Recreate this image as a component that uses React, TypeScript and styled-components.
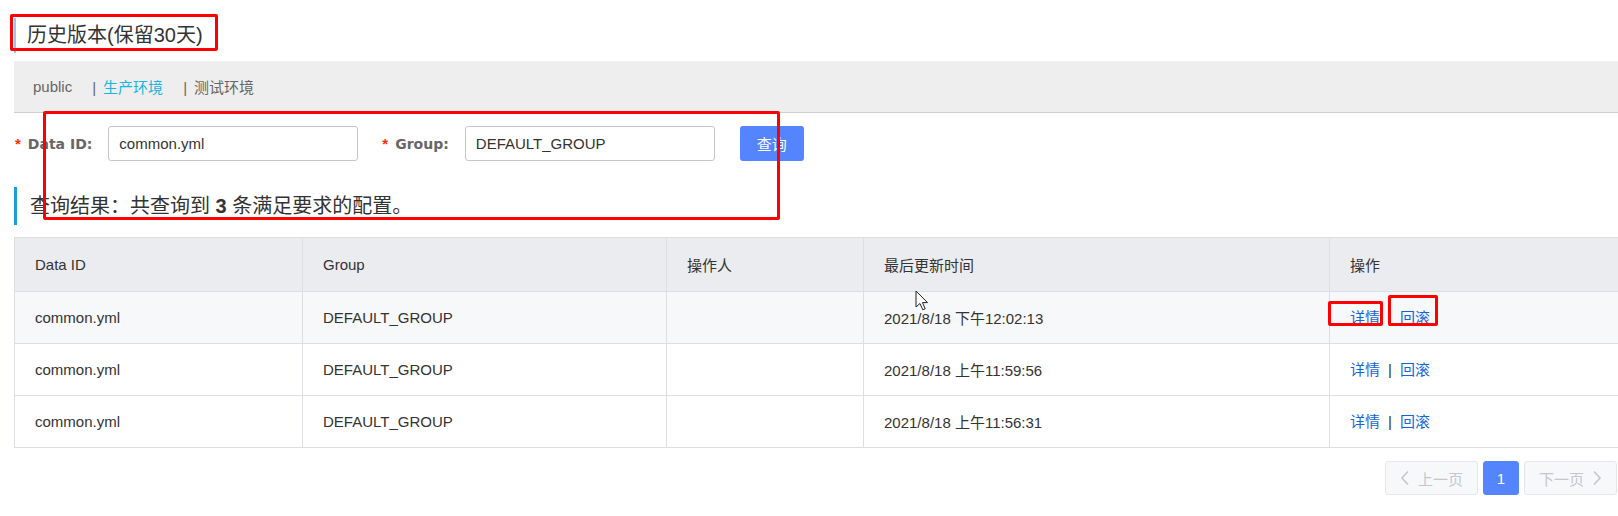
import React from "react";
import styled, { createGlobalStyle } from "styled-components";

const GlobalStyle = createGlobalStyle`
    body {
        margin: 0;
        background: #fff;
        font-family: "Liberation Sans", "Noto Sans CJK SC", sans-serif;
        font-size: 15px;
        color: #333;
    }
`;

const Page = styled.div`
    position: relative;
    width: 1618px;
    height: 516px;
    padding-left: 14px;
    box-sizing: border-box;
    overflow: hidden;
`;

const Title = styled.div`
    margin-top: 18px;
    height: 35px;
    line-height: 35px;
    border-left: 2px solid #9cc3ea;
    padding-left: 11px;
    font-size: 20px;
    color: #333;
`;

const NavBar = styled.div`
    margin-top: 8px;
    height: 51px;
    background: #eeeeee;
    border-bottom: 1px solid #cfcfcf;
    display: flex;
    align-items: center;
    padding-left: 19px;
    color: #666;
`;

const NavItem = styled.span<{ $active?: boolean }>`
    margin-right: 20px;
    color: ${(p) => (p.$active ? "#1ab4de" : "#666")};
`;

const Sep = styled.span`
    color: #666;
    margin-right: 7px;
`;

const FormRow = styled.div`
    margin-top: 13px;
    height: 35px;
    display: flex;
    align-items: center;
    padding-left: 1px;
`;

const Field = styled.div`
    display: flex;
    align-items: center;
    margin-right: 24px;
`;

const Star = styled.span`
    color: #ff3000;
    font-weight: bold;
    margin-right: 7px;
`;

const Label = styled.label`
    font-family: "DejaVu Sans", "Noto Sans CJK SC", sans-serif;
    font-size: 14px;
    font-weight: bold;
    color: #666;
    margin-right: 16px;
`;

const Input = styled.div`
    width: 250px;
    height: 35px;
    box-sizing: border-box;
    border: 1px solid #c4c6cf;
    border-radius: 3px;
    padding-left: 10px;
    display: flex;
    align-items: center;
    color: #333;
`;

const Button = styled.button`
    width: 64px;
    height: 35px;
    border: none;
    border-radius: 3px;
    background: #5584ff;
    color: #fff;
    font-family: inherit;
    font-size: 15px;
    margin-left: 1px;
`;

const ResultHeading = styled.div`
    margin-top: 26px;
    height: 38px;
    line-height: 38px;
    border-left: 3px solid #1a9fd8;
    padding-left: 13px;
    font-size: 20px;
    color: #333;
    b {
        font-weight: bold;
    }
`;

const Table = styled.table`
    margin-top: 12px;
    width: 1604px;
    border-collapse: collapse;
    table-layout: fixed;
    th,
    td {
        border: 1px solid #dcdee3;
        padding: 0 0 0 20px;
        text-align: left;
        font-weight: normal;
        color: #333;
    }
    th {
        height: 53px;
        background: #ebecf0;
    }
    td {
        height: 51px;
    }
`;

const Row = styled.tr<{ $hover?: boolean }>`
    background: ${(p) => (p.$hover ? "#f7f8fa" : "#fff")};
`;

const Actions = styled.span`
    position: relative;
    display: inline-block;
    line-height: 20px;
    a {
        color: #1665d8;
        text-decoration: none;
    }
`;

const Divider = styled.span`
    color: #333;
    margin: 0 8px;
`;

const Pager = styled.div`
    margin-top: 13px;
    margin-right: 1px;
    display: flex;
    justify-content: flex-end;
    gap: 5px;
`;

const PageBtn = styled.div<{ $active?: boolean }>`
    height: 34px;
    box-sizing: border-box;
    border-radius: 3px;
    display: flex;
    align-items: center;
    justify-content: center;
    gap: 8px;
    padding: 0 ${(p) => (p.$active ? "0" : "14px")};
    width: ${(p) => (p.$active ? "36px" : "auto")};
    border: 1px solid ${(p) => (p.$active ? "#5584ff" : "#e6e7eb")};
    background: ${(p) => (p.$active ? "#5584ff" : "#f7f8fa")};
    color: ${(p) => (p.$active ? "#fff" : "#c4c6cf")};
`;

const Mark = styled.div`
    position: absolute;
    box-sizing: border-box;
    border: 3px solid #ff0000;
    border-radius: 2px;
    pointer-events: none;
`;

const Cursor = styled.svg`
    position: absolute;
    left: 915px;
    top: 290px;
`;

const rows = [
    { time: "2021/8/18 下午12:02:13", hover: true },
    { time: "2021/8/18 上午11:59:56" },
    { time: "2021/8/18 上午11:56:31" },
];

function Chevron({ dir }: { dir: "left" | "right" }) {
    return (
        <svg width="10" height="16" viewBox="0 0 10 16">
            <path
                d={dir === "left" ? "M8 1.5 L2 8 L8 14.5" : "M2 1.5 L8 8 L2 14.5"}
                fill="none"
                stroke="#c4c6cf"
                strokeWidth="1.6"
            />
        </svg>
    );
}

export default function App() {
    return (
        <Page>
            <GlobalStyle />
            <Title>历史版本(保留30天)</Title>
            <NavBar>
                <NavItem>public</NavItem>
                <NavItem $active>
                    <Sep>|</Sep>生产环境
                </NavItem>
                <NavItem>
                    <Sep>|</Sep>测试环境
                </NavItem>
            </NavBar>
            <FormRow>
                <Field>
                    <Star>*</Star>
                    <Label>Data ID:</Label>
                    <Input>common.yml</Input>
                </Field>
                <Field>
                    <Star>*</Star>
                    <Label>Group:</Label>
                    <Input>DEFAULT_GROUP</Input>
                </Field>
                <Button>查询</Button>
            </FormRow>
            <ResultHeading>
                查询结果：共查询到 <b>3</b> 条满足要求的配置。
            </ResultHeading>
            <Table>
                <colgroup>
                    <col style={{ width: 288 }} />
                    <col style={{ width: 364 }} />
                    <col style={{ width: 197 }} />
                    <col style={{ width: 466 }} />
                    <col style={{ width: 289 }} />
                </colgroup>
                <thead>
                    <tr>
                        <th>Data ID</th>
                        <th>Group</th>
                        <th>操作人</th>
                        <th>最后更新时间</th>
                        <th>操作</th>
                    </tr>
                </thead>
                <tbody>
                    {rows.map((r, i) => (
                        <Row key={i} $hover={r.hover}>
                            <td>common.yml</td>
                            <td>DEFAULT_GROUP</td>
                            <td></td>
                            <td>{r.time}</td>
                            <td>
                                <Actions>
                                    <a href="#">详情</a>
                                    <Divider>|</Divider>
                                    <a href="#">回滚</a>
                                    {i === 0 && (
                                        <>
                                            <Mark style={{ left: -22, top: -7, width: 55, height: 25 }} />
                                            <Mark style={{ left: 38, top: -13, width: 50, height: 31 }} />
                                        </>
                                    )}
                                </Actions>
                            </td>
                        </Row>
                    ))}
                </tbody>
            </Table>
            <Pager>
                <PageBtn>
                    <Chevron dir="left" />
                    上一页
                </PageBtn>
                <PageBtn $active>1</PageBtn>
                <PageBtn>
                    下一页
                    <Chevron dir="right" />
                </PageBtn>
            </Pager>
            <Mark style={{ left: 10, top: 14, width: 208, height: 37 }} />
            <Mark style={{ left: 43, top: 111, width: 737, height: 109 }} />
            <Cursor width="14" height="22" viewBox="0 0 14 22">
                <path
                    d="M1 1 L1 17 L5 13.5 L7.8 19.8 L10.2 18.8 L7.5 12.6 L12.5 12.6 Z"
                    fill="#fff"
                    stroke="#222"
                    strokeWidth="1"
                />
            </Cursor>
        </Page>
    );
}
